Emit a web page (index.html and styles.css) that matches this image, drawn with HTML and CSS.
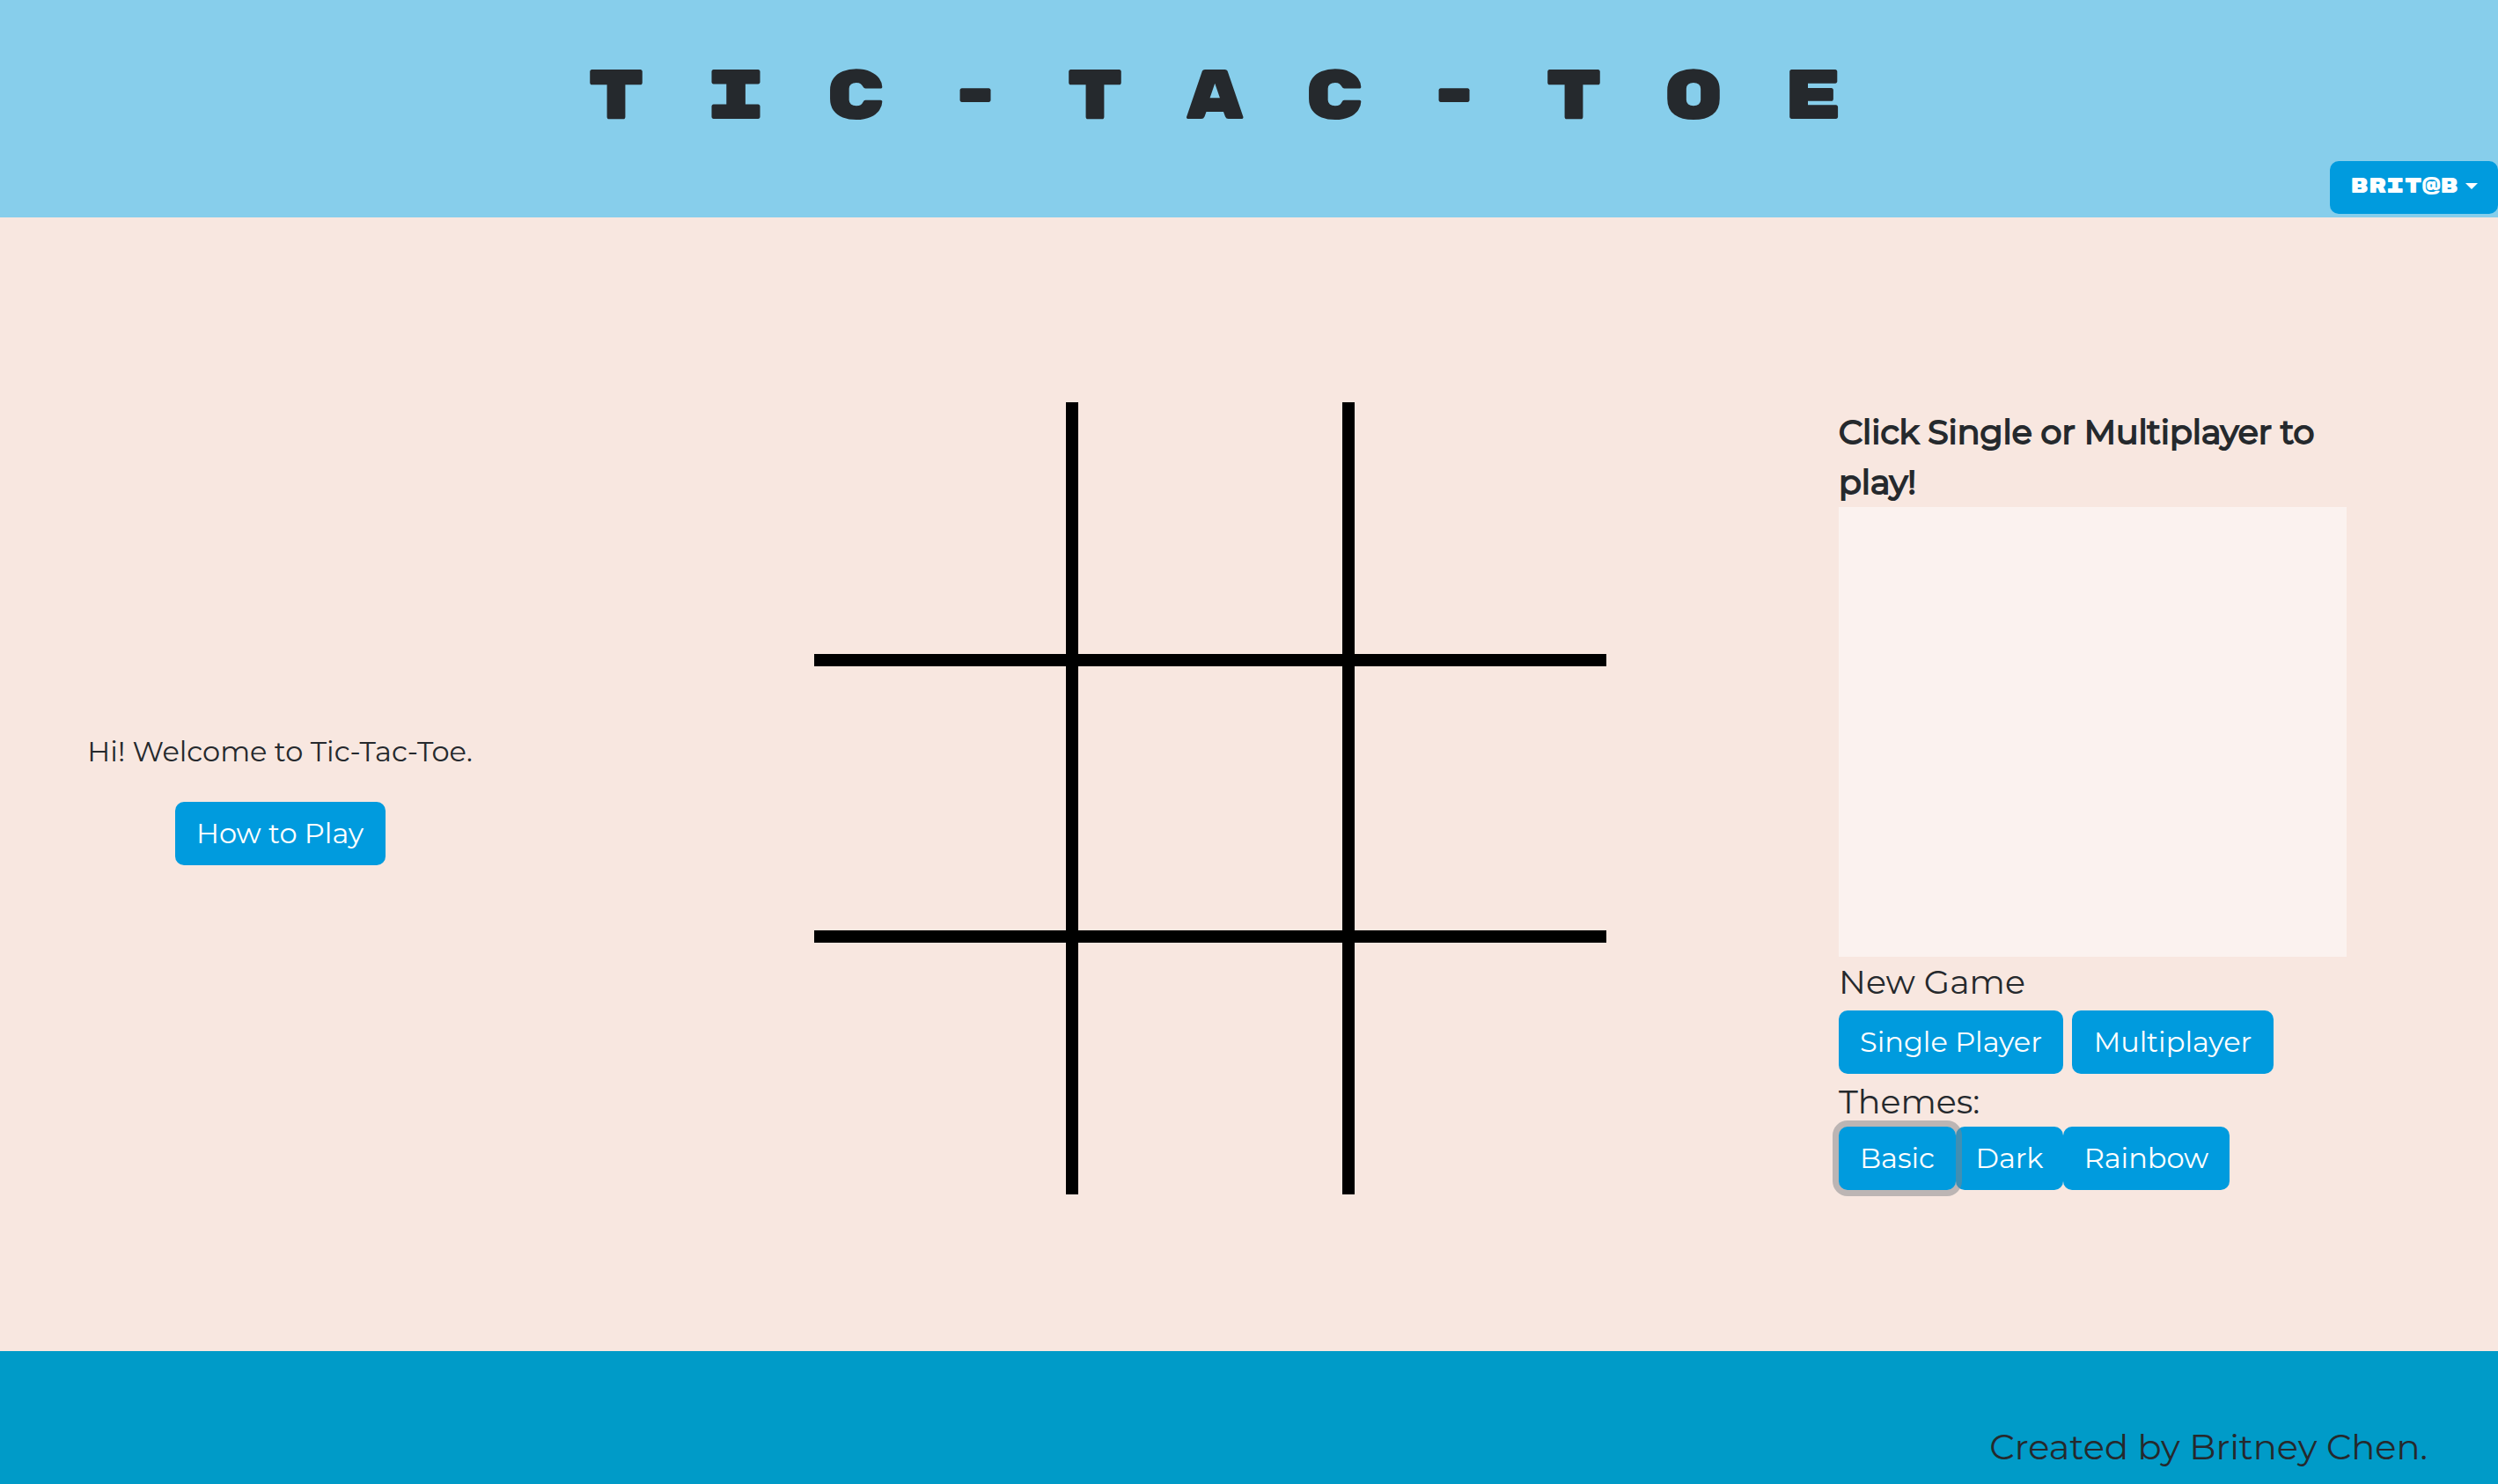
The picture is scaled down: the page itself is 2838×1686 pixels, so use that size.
FILE: index.html
```html
<!DOCTYPE html>
<html lang="en">
<head>
  <meta charset="utf-8">
  <title>Tic-Tac-Toe</title>
  <link rel="stylesheet" href="styles.css">
</head>
<body>
  <header class="header">
    <h1 class="title">TIC-TAC-TOE</h1>
    <button class="btn user-menu" type="button" aria-haspopup="true">BRIT@B<span class="caret"></span></button>
  </header>
  <main class="main">
    <section class="welcome">
      <p class="greeting">Hi! Welcome to Tic-Tac-Toe.</p>
      <button class="btn how-to" type="button">How to Play</button>
    </section>
    <section class="board" aria-label="Game board">
      <div class="cell"></div><div class="cell"></div><div class="cell"></div>
      <div class="cell"></div><div class="cell"></div><div class="cell"></div>
      <div class="cell"></div><div class="cell"></div><div class="cell"></div>
    </section>
    <section class="panel">
      <h2 class="status">Click Single or Multiplayer to play!</h2>
      <div class="log" role="log"></div>
      <h3 class="label">New Game</h3>
      <div class="modes">
        <button class="btn single" type="button">Single Player</button>
        <button class="btn multi" type="button">Multiplayer</button>
      </div>
      <h3 class="label">Themes:</h3>
      <div class="themes">
        <button class="btn basic selected" type="button">Basic</button>
        <button class="btn dark" type="button">Dark</button>
        <button class="btn rainbow" type="button">Rainbow</button>
      </div>
    </section>
  </main>
  <footer class="footer">Created by Britney Chen.</footer>
</body>
</html>
```
FILE: styles.css
```css
* {
  box-sizing: border-box;
}

body {
  margin: 0;
  min-height: 100vh;
  display: flex;
  flex-direction: column;
  background: #f8e7e0;
  color: #25292d;
  font-family: Montserrat, Inter, "Open Sans", sans-serif;
  font-size: 32px;
  font-weight: 400;
}

h1, h2, h3, p {
  margin: 0;
}

.header {
  display: flex;
  flex-direction: column;
  align-items: flex-end;
  padding-bottom: 4px;
  background: #87ceeb;
}

.title {
  width: 100%;
  padding: 60px 10px 23px 0;
  font-family: "Rubik Mono One", "DejaVu Sans Mono", monospace;
  font-size: 80px;
  font-weight: 400;
  line-height: 100px;
  letter-spacing: 68px;
  text-align: center;
  white-space: nowrap;
}

.btn {
  height: 72px;
  padding: 0 16px 2px;
  border: 0;
  border-radius: 10px;
  background: #009bde;
  color: #fff;
  font: inherit;
  white-space: nowrap;
}

.user-menu {
  display: flex;
  align-items: center;
  justify-content: center;
  gap: 8px;
  width: 191px;
  height: 60px;
  padding-bottom: 4px;
  font-family: "Rubik Mono One", "DejaVu Sans", sans-serif;
  font-size: 24px;
  font-weight: 400;
}

.caret {
  border: 7px solid transparent;
  border-top-color: #fff;
  border-bottom: 0;
}

.main {
  flex: 1;
  display: grid;
  grid-template-columns: 661fr 1428fr 749fr;
  align-items: center;
  padding-top: 32px;
}

.welcome {
  display: flex;
  flex-direction: column;
  align-items: center;
  gap: 34px;
  padding-right: 25px;
}

.greeting {
  line-height: 46px;
}

.how-to {
  min-width: 239px;
}

.board {
  justify-self: center;
  display: grid;
  grid-template-columns: 286px 300px 286px;
  grid-template-rows: 286px 300px 286px;
  gap: 14px;
}

/* Only the inner edges of the grid are ruled. */
.cell:not(:nth-child(3n)) {
  box-shadow: 14px 0 #000;
}

.cell:nth-child(-n+6) {
  box-shadow: 0 14px #000;
}

.cell:nth-child(-n+6):not(:nth-child(3n)) {
  box-shadow: 14px 0 #000, 0 14px #000, 14px 14px #000;
}

.panel {
  width: 77%;
}

.status {
  font-size: 38px;
  font-weight: 400;
  line-height: 57px;
  -webkit-text-stroke: 2px;
}

.log {
  height: 511px;
  background: #fbf2ef;
}

.label {
  font-size: 38px;
  font-weight: 400;
  line-height: 57px;
}

.modes {
  display: flex;
  gap: 10px;
  padding: 4px 0 3px;
}

.themes {
  display: flex;
}

.single {
  min-width: 255px;
}

.multi {
  min-width: 229px;
}

.basic {
  min-width: 133px;
}

.dark {
  min-width: 122px;
}

.rainbow {
  min-width: 189px;
}

.selected {
  z-index: 1;
  box-shadow: 0 0 0 7px rgba(128, 132, 135, 0.5);
}

.footer {
  padding: 79px 80px 12px;
  background: #009bc8;
  font-size: 40px;
  line-height: 60px;
  text-align: right;
}
```
